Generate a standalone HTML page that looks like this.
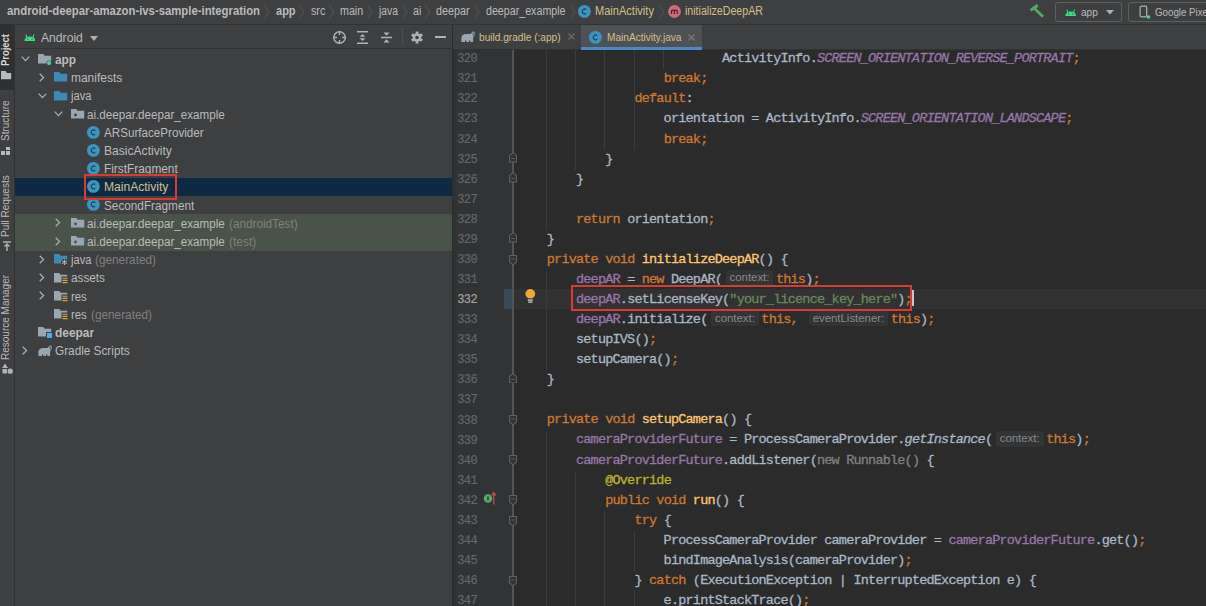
<!DOCTYPE html><html><head><meta charset="utf-8"><style>
*{margin:0;padding:0;box-sizing:border-box}
html,body{width:1206px;height:606px;overflow:hidden;background:#3e3f41;font-family:"Liberation Sans",sans-serif;color:#bbbbbb;position:relative}
div,.p{position:absolute}
.t{position:absolute;white-space:nowrap;font-size:12px;line-height:14px}
.b{font-weight:bold}
.gold{color:#d6bf8a}
.gr{color:#808080}
.ln{position:absolute;left:440px;width:37px;text-align:right;font-family:"Liberation Mono",monospace;font-size:12px;letter-spacing:-0.6px;line-height:20.07px;-webkit-text-stroke:0.2px currentColor;color:#606366}
#code{left:517.6px;top:49.3px;font-family:"Liberation Mono",monospace;font-size:13.5px;letter-spacing:-0.8px;line-height:20.07px;-webkit-text-stroke:0.3px currentColor;color:#a9b7c6;white-space:pre}
.k{color:#cc7832}.f{color:#9876aa}.s{color:#6a8759}.m{color:#ffc66d}.a{color:#bbb529}.i{font-style:italic}.g{color:#808080}
.hint{display:inline-block;-webkit-text-stroke:0;font-family:"Liberation Sans",sans-serif;font-size:11.4px;letter-spacing:0;color:#8a8a8a;background:#323436;border-radius:3px;line-height:15.6px;padding:0 4px;margin:0 2.5px 0 3.5px;vertical-align:1.5px}
.vt{position:absolute;white-space:nowrap;font-size:10px;line-height:12px;transform-origin:0 0;transform:rotate(-90deg)}
</style></head><body>
<div style="left:0px;top:0px;width:1206px;height:24px;background:#3e3f41;"></div>
<div style="left:0px;top:24px;width:1206px;height:1px;background:#323232;"></div>
<div style="left:0px;top:25px;width:14px;height:581px;background:#3e3f41;"></div>
<div style="left:0px;top:25px;width:14px;height:65px;background:#2d2f30;"></div>
<div style="left:14px;top:25px;width:1px;height:581px;background:#323232;"></div>
<div style="left:15px;top:25px;width:438px;height:581px;background:#3e3f41;"></div>
<div style="left:15px;top:48px;width:438px;height:1px;background:#323232;"></div>
<div style="left:453px;top:25px;width:753px;height:24px;background:#3e3f41;"></div>
<div style="left:452px;top:25px;width:1px;height:581px;background:#2b2b2b;"></div>
<div style="left:453px;top:49px;width:753px;height:1px;background:#323232;"></div>
<div style="left:453px;top:50px;width:753px;height:556px;background:#2b2b2b;"></div>
<div style="left:453px;top:50px;width:60px;height:556px;background:#313335;"></div>
<div style="left:453px;top:50px;width:3px;height:556px;background:#2f3133;"></div>
<span class="t b" style="left:7.3px;top:4.3px;font-size:12px;transform-origin:0 0;transform:scaleX(0.9439);">android-deepar-amazon-ivs-sample-integration</span>
<svg class="p" style="left:263.5px;top:5px" width="6" height="14" viewBox="0 0 6 14"><path d="M0.5 0.3 L4.8 6.8 L0.5 13.5" fill="none" stroke="#55585a" stroke-width="0.9"/></svg>
<span class="t b" style="left:275.7px;top:4.3px;font-size:12px;transform-origin:0 0;transform:scaleX(0.9189);">app</span>
<svg class="p" style="left:299px;top:5px" width="6" height="14" viewBox="0 0 6 14"><path d="M0.5 0.3 L4.8 6.8 L0.5 13.5" fill="none" stroke="#55585a" stroke-width="0.9"/></svg>
<span class="t " style="left:310.5px;top:4.3px;font-size:12px;transform-origin:0 0;transform:scaleX(0.8940);">src</span>
<svg class="p" style="left:329px;top:5px" width="6" height="14" viewBox="0 0 6 14"><path d="M0.5 0.3 L4.8 6.8 L0.5 13.5" fill="none" stroke="#55585a" stroke-width="0.9"/></svg>
<span class="t " style="left:340.4px;top:4.3px;font-size:12px;transform-origin:0 0;transform:scaleX(0.8920);">main</span>
<svg class="p" style="left:367px;top:5px" width="6" height="14" viewBox="0 0 6 14"><path d="M0.5 0.3 L4.8 6.8 L0.5 13.5" fill="none" stroke="#55585a" stroke-width="0.9"/></svg>
<span class="t " style="left:378.5px;top:4.3px;font-size:12px;transform-origin:0 0;transform:scaleX(0.8639);">java</span>
<svg class="p" style="left:402px;top:5px" width="6" height="14" viewBox="0 0 6 14"><path d="M0.5 0.3 L4.8 6.8 L0.5 13.5" fill="none" stroke="#55585a" stroke-width="0.9"/></svg>
<span class="t " style="left:413.3px;top:4.3px;font-size:12px;transform-origin:0 0;transform:scaleX(0.8877);">ai</span>
<svg class="p" style="left:425px;top:5px" width="6" height="14" viewBox="0 0 6 14"><path d="M0.5 0.3 L4.8 6.8 L0.5 13.5" fill="none" stroke="#55585a" stroke-width="0.9"/></svg>
<span class="t " style="left:436.3px;top:4.3px;font-size:12px;transform-origin:0 0;transform:scaleX(0.9018);">deepar</span>
<svg class="p" style="left:474px;top:5px" width="6" height="14" viewBox="0 0 6 14"><path d="M0.5 0.3 L4.8 6.8 L0.5 13.5" fill="none" stroke="#55585a" stroke-width="0.9"/></svg>
<span class="t " style="left:485.6px;top:4.3px;font-size:12px;transform-origin:0 0;transform:scaleX(0.8894);">deepar_example</span>
<svg class="p" style="left:569.5px;top:5px" width="6" height="14" viewBox="0 0 6 14"><path d="M0.5 0.3 L4.8 6.8 L0.5 13.5" fill="none" stroke="#55585a" stroke-width="0.9"/></svg>
<svg class="p" style="left:576.9px;top:4.1px" width="14.8" height="14.8" viewBox="0 0 14.8 14.8"><circle cx="7.4" cy="7.4" r="6.4" fill="#3d95bd"/><path d="M9.3 5.7 A2.35 2.35 0 1 0 9.3 9.1" fill="none" stroke="#163f55" stroke-width="1.05"/></svg>
<span class="t gold" style="left:595.2px;top:4.3px;font-size:12px;transform-origin:0 0;transform:scaleX(0.9201);">MainActivity</span>
<svg class="p" style="left:658.5px;top:5px" width="6" height="14" viewBox="0 0 6 14"><path d="M0.5 0.3 L4.8 6.8 L0.5 13.5" fill="none" stroke="#55585a" stroke-width="0.9"/></svg>
<svg class="p" style="left:666.8px;top:3.8px" width="15" height="15" viewBox="0 0 15 15"><circle cx="7.5" cy="7.5" r="6.4" fill="#c96d7a"/><path d="M4.6 10 V6 M4.6 6.8 Q5.8 5.6 7.4 6.5 V10 M7.4 6.8 Q8.6 5.6 10.2 6.5 V10" fill="none" stroke="#4a1f25" stroke-width="1.1"/></svg>
<span class="t gold" style="left:684.5px;top:4.3px;font-size:12px;transform-origin:0 0;transform:scaleX(0.8848);">initializeDeepAR</span>
<svg class="p" style="left:1029px;top:4px" width="16" height="15" viewBox="0 0 16 15"><path d="M1.6 6.4 L8.6 1.2" stroke="#55a865" stroke-width="3"/><path d="M5.6 4.4 L14 12.8" stroke="#55a865" stroke-width="2.8"/></svg>
<div style="left:1055px;top:2px;width:67px;height:20px;background:transparent;border:1px solid #5e6060;border-radius:3px"></div>
<svg class="p" style="left:1064.8px;top:8.5px" width="11.5" height="7.1875" viewBox="0 0 24 15"><path d="M0.8 15 C1.2 8.5 4.5 5 12 5 C19.5 5 22.8 8.5 23.2 15 Z" fill="#3ddc84"/><path d="M5.8 6.5 L4 2 M18.2 6.5 L20 2" stroke="#3ddc84" stroke-width="2.2" stroke-linecap="round"/><circle cx="7.6" cy="10.3" r="1.3" fill="#1f5a3a"/><circle cx="16.4" cy="10.3" r="1.3" fill="#1f5a3a"/></svg>
<span class="t " style="left:1081.3px;top:4.8999999999999995px;font-size:11px;transform-origin:0 0;transform:scaleX(0.9158);">app</span>
<svg class="p" style="left:1105.6px;top:10px" width="8" height="4.6" viewBox="0 0 8 4.6"><path d="M0 0 H8 L4 4.6 Z" fill="#afb1b3"/></svg>
<div style="left:1128px;top:2px;width:90px;height:20px;background:transparent;border:1px solid #5e6060;border-radius:3px"></div>
<svg class="p" style="left:1139px;top:5px" width="12" height="14" viewBox="0 0 12 14"><rect x="1.1" y="1.2" width="6.6" height="10.6" rx="1.2" fill="none" stroke="#afb1b3" stroke-width="1.2"/><circle cx="9.5" cy="12" r="1.8" fill="#3ddc84"/></svg>
<span class="t " style="left:1154.8px;top:4.7px;font-size:11px;transform-origin:0 0;transform:scaleX(0.8849);">Google Pixel</span>
<span class="vt b" style="left:0.2px;top:65.5px;color:#d8d8d8;transform:rotate(-90deg) scaleX(0.94)">Project</span>
<svg class="p" style="left:1px;top:71px" width="11" height="9" viewBox="0 0 11 9"><path d="M0 0 H4.6 L5.8 2 H10.2 V8.2 H0 Z" fill="#b9bbbd"/></svg>
<span class="vt " style="left:-0.3px;top:140.6px;">Structure</span>
<span class="vt " style="left:-0.3px;top:236.8px;">Pull Requests</span>
<span class="vt " style="left:-0.3px;top:359.5px;">Resource Manager</span>
<div style="left:6px;top:147px;width:4px;height:3px;background:#b9bbbd;"></div>
<div style="left:1px;top:151px;width:4px;height:4px;background:#b9bbbd;"></div>
<div style="left:6px;top:151px;width:4px;height:4px;background:#b9bbbd;"></div>
<svg class="p" style="left:2px;top:241px" width="10" height="11" viewBox="0 0 10 11"><path d="M1 1 H9 M5 10 V3 M2.5 5.5 L5 3 L7.5 5.5" fill="none" stroke="#afb1b3" stroke-width="1.5"/></svg>
<svg class="p" style="left:2px;top:363px" width="11" height="11" viewBox="0 0 11 11"><path d="M3 0.5 L6 5 H0 Z" fill="#afb1b3"/><rect x="0.5" y="6" width="4.5" height="4.5" fill="#afb1b3"/><circle cx="8.2" cy="8.2" r="2.6" fill="#afb1b3"/></svg>
<svg class="p" style="left:23.6px;top:34.1px" width="11.8" height="7.375" viewBox="0 0 24 15"><path d="M0.8 15 C1.2 8.5 4.5 5 12 5 C19.5 5 22.8 8.5 23.2 15 Z" fill="#3ddc84"/><path d="M5.8 6.5 L4 2 M18.2 6.5 L20 2" stroke="#3ddc84" stroke-width="2.2" stroke-linecap="round"/><circle cx="7.6" cy="10.3" r="1.3" fill="#1f5a3a"/><circle cx="16.4" cy="10.3" r="1.3" fill="#1f5a3a"/></svg>
<span class="t " style="left:41px;top:30.6px;font-size:12px;transform-origin:0 0;transform:scaleX(1.0126);">Android</span>
<svg class="p" style="left:90px;top:36px" width="8" height="5" viewBox="0 0 8 5"><path d="M0 0 H8 L4 5 Z" fill="#afb1b3"/></svg>
<svg class="p" style="left:332px;top:30px" width="15" height="15" viewBox="0 0 15 15"><circle cx="7.5" cy="7.5" r="5.8" fill="none" stroke="#afb1b3" stroke-width="1.4"/><path d="M7.5 1 V5 M7.5 10 V14 M1 7.5 H5 M10 7.5 H14" stroke="#afb1b3" stroke-width="1.4"/></svg>
<svg class="p" style="left:357px;top:31px" width="12" height="13" viewBox="0 0 12 13"><path d="M0 0.8 H11 M0 12.2 H11" stroke="#afb1b3" stroke-width="1.5"/><path d="M5.5 3 L8.5 5.8 H2.5 Z M5.5 10 L8.5 7.2 H2.5 Z" fill="#afb1b3"/></svg>
<svg class="p" style="left:381px;top:31px" width="12" height="13" viewBox="0 0 12 13"><path d="M0 6.5 H11" stroke="#afb1b3" stroke-width="1.5"/><path d="M5.5 4.8 L8.5 1.5 H2.5 Z M5.5 8.2 L8.5 11.5 H2.5 Z" fill="#afb1b3"/></svg>
<div style="left:401.5px;top:28px;width:1px;height:17px;background:#4b4d4f;"></div>
<svg class="p" style="left:410.5px;top:30.5px" width="12" height="13" viewBox="0 0 12 13"><g transform="translate(6 6.5)"><circle r="4.2" fill="#afb1b3"/><g fill="#afb1b3"><rect x="-1.4" y="-6" width="2.8" height="12"/><rect x="-1.4" y="-6" width="2.8" height="12" transform="rotate(60)"/><rect x="-1.4" y="-6" width="2.8" height="12" transform="rotate(120)"/></g><circle r="1.8" fill="#3e3f41"/></g></svg>
<div style="left:435px;top:36.2px;width:11px;height:1.8px;background:#afb1b3;"></div>
<div style="left:15px;top:177.5px;width:437px;height:18.5px;background:#0e2a42;"></div>
<div style="left:15px;top:213.89999999999998px;width:437px;height:36.9px;background:#4a5349;"></div>
<svg class="p" style="left:21.2px;top:56.1px" width="9" height="6" viewBox="0 0 9 6"><path d="M0.7 0.7 L4.5 4.6 L8.3 0.7" fill="none" stroke="#afb1b3" stroke-width="1.2"/></svg>
<svg class="p" style="left:38px;top:54.2px" width="14" height="11" viewBox="0 0 14 11"><path d="M0 0 H5.2 L6.6 1.8 H13.2 V9.6 H0 Z" fill="#9aa7b0"/><circle cx="11" cy="9" r="2.6" fill="#3e3f41"/><circle cx="11" cy="9" r="2.1" fill="#3ddc84"/></svg>
<span class="t b" style="left:55px;top:52.9px;font-size:12px;transform-origin:0 0;transform:scaleX(0.9855);">app</span>
<svg class="p" style="left:38.9px;top:72.7px" width="6" height="9" viewBox="0 0 6 9"><path d="M0.7 0.7 L4.6 4.5 L0.7 8.3" fill="none" stroke="#afb1b3" stroke-width="1.2"/></svg>
<svg class="p" style="left:54px;top:72.39999999999999px" width="14" height="11" viewBox="0 0 14 11"><path d="M0 0 H5.2 L6.6 1.8 H13.2 V9.6 H0 Z" fill="#3d8bb5"/></svg>
<span class="t " style="left:70.8px;top:71.1px;font-size:12px;transform-origin:0 0;transform:scaleX(0.9970);">manifests</span>
<svg class="p" style="left:38.2px;top:92.5px" width="9" height="6" viewBox="0 0 9 6"><path d="M0.7 0.7 L4.5 4.6 L8.3 0.7" fill="none" stroke="#afb1b3" stroke-width="1.2"/></svg>
<svg class="p" style="left:54px;top:90.6px" width="14" height="11" viewBox="0 0 14 11"><path d="M0 0 H5.2 L6.6 1.8 H13.2 V9.6 H0 Z" fill="#3d8bb5"/></svg>
<span class="t " style="left:71.2px;top:89.3px;font-size:12px;transform-origin:0 0;transform:scaleX(0.9266);">java</span>
<svg class="p" style="left:54.2px;top:110.69999999999999px" width="9" height="6" viewBox="0 0 9 6"><path d="M0.7 0.7 L4.5 4.6 L8.3 0.7" fill="none" stroke="#afb1b3" stroke-width="1.2"/></svg>
<svg class="p" style="left:70.8px;top:108.79999999999998px" width="14" height="11" viewBox="0 0 14 11"><path d="M0 0 H5.2 L6.6 1.8 H13.2 V9.6 H0 Z" fill="#9aa7b0"/><circle cx="4.5" cy="6" r="1.4" fill="#3e3f41"/></svg>
<span class="t " style="left:87.2px;top:107.49999999999999px;font-size:12px;transform-origin:0 0;transform:scaleX(0.9696);">ai.deepar.deepar_example</span>
<svg class="p" style="left:86.1px;top:124.5px" width="14.8" height="14.8" viewBox="0 0 14.8 14.8"><circle cx="7.4" cy="7.4" r="6.4" fill="#3d95bd"/><path d="M9.3 5.7 A2.35 2.35 0 1 0 9.3 9.1" fill="none" stroke="#163f55" stroke-width="1.05"/></svg>
<span class="t " style="left:103.9px;top:125.7px;font-size:12px;transform-origin:0 0;transform:scaleX(0.9697);">ARSurfaceProvider</span>
<svg class="p" style="left:86.1px;top:142.7px" width="14.8" height="14.8" viewBox="0 0 14.8 14.8"><circle cx="7.4" cy="7.4" r="6.4" fill="#3d95bd"/><path d="M9.3 5.7 A2.35 2.35 0 1 0 9.3 9.1" fill="none" stroke="#163f55" stroke-width="1.05"/></svg>
<span class="t " style="left:103.9px;top:143.9px;font-size:12px;transform-origin:0 0;transform:scaleX(1.0067);">BasicActivity</span>
<svg class="p" style="left:86.1px;top:160.89999999999998px" width="14.8" height="14.8" viewBox="0 0 14.8 14.8"><circle cx="7.4" cy="7.4" r="6.4" fill="#3d95bd"/><path d="M9.3 5.7 A2.35 2.35 0 1 0 9.3 9.1" fill="none" stroke="#163f55" stroke-width="1.05"/></svg>
<span class="t " style="left:103.9px;top:162.1px;font-size:12px;transform-origin:0 0;transform:scaleX(0.9875);">FirstFragment</span>
<svg class="p" style="left:86.1px;top:179.1px" width="14.8" height="14.8" viewBox="0 0 14.8 14.8"><circle cx="7.4" cy="7.4" r="6.4" fill="#3d95bd"/><path d="M9.3 5.7 A2.35 2.35 0 1 0 9.3 9.1" fill="none" stroke="#163f55" stroke-width="1.05"/></svg>
<span class="t gold" style="left:103.9px;top:180.3px;font-size:12px;transform-origin:0 0;transform:scaleX(1.0060);">MainActivity</span>
<svg class="p" style="left:86.1px;top:197.29999999999998px" width="14.8" height="14.8" viewBox="0 0 14.8 14.8"><circle cx="7.4" cy="7.4" r="6.4" fill="#3d95bd"/><path d="M9.3 5.7 A2.35 2.35 0 1 0 9.3 9.1" fill="none" stroke="#163f55" stroke-width="1.05"/></svg>
<span class="t " style="left:103.9px;top:198.5px;font-size:12px;transform-origin:0 0;transform:scaleX(0.9804);">SecondFragment</span>
<div style="left:83.6px;top:174px;width:93.8px;height:25.6px;background:transparent;border:2.5px solid #d83b36"></div>
<svg class="p" style="left:55.199999999999996px;top:218.29999999999998px" width="6" height="9" viewBox="0 0 6 9"><path d="M0.7 0.7 L4.6 4.5 L0.7 8.3" fill="none" stroke="#afb1b3" stroke-width="1.2"/></svg>
<svg class="p" style="left:70.8px;top:217.99999999999997px" width="14" height="11" viewBox="0 0 14 11"><path d="M0 0 H5.2 L6.6 1.8 H13.2 V9.6 H0 Z" fill="#9aa7b0"/><circle cx="4.5" cy="6" r="1.4" fill="#4a5349"/></svg>
<span class="t " style="left:87.3px;top:216.7px;font-size:12px;transform-origin:0 0;transform:scaleX(0.9696);">ai.deepar.deepar_example</span>
<span class="t gr" style="left:229.3px;top:216.7px;font-size:12px;transform-origin:0 0;transform:scaleX(0.9795);">(androidTest)</span>
<svg class="p" style="left:55.199999999999996px;top:236.5px" width="6" height="9" viewBox="0 0 6 9"><path d="M0.7 0.7 L4.6 4.5 L0.7 8.3" fill="none" stroke="#afb1b3" stroke-width="1.2"/></svg>
<svg class="p" style="left:70.8px;top:236.2px" width="14" height="11" viewBox="0 0 14 11"><path d="M0 0 H5.2 L6.6 1.8 H13.2 V9.6 H0 Z" fill="#9aa7b0"/><circle cx="4.5" cy="6" r="1.4" fill="#4a5349"/></svg>
<span class="t " style="left:87.3px;top:234.9px;font-size:12px;transform-origin:0 0;transform:scaleX(0.9696);">ai.deepar.deepar_example</span>
<span class="t gr" style="left:229.3px;top:234.9px;font-size:12px;transform-origin:0 0;transform:scaleX(0.9950);">(test)</span>
<svg class="p" style="left:38.9px;top:254.7px" width="6" height="9" viewBox="0 0 6 9"><path d="M0.7 0.7 L4.6 4.5 L0.7 8.3" fill="none" stroke="#afb1b3" stroke-width="1.2"/></svg>
<svg class="p" style="left:54px;top:254.39999999999998px" width="14" height="11" viewBox="0 0 14 11"><path d="M0 0 H5.2 L6.6 1.8 H13.2 V9.6 H0 Z" fill="#3d8bb5"/><circle cx="10.5" cy="8.3" r="3.4" fill="#3e3f41"/><g stroke="#afb1b3" stroke-width="1"><path d="M10.5 5.6 V11 M8 6.9 L13 9.7 M8 9.7 L13 6.9"/></g></svg>
<span class="t " style="left:70.9px;top:253.1px;font-size:12px;transform-origin:0 0;transform:scaleX(0.9266);">java</span>
<span class="t gr" style="left:95.4px;top:253.1px;font-size:12px;transform-origin:0 0;transform:scaleX(0.9832);">(generated)</span>
<svg class="p" style="left:38.9px;top:272.9px" width="6" height="9" viewBox="0 0 6 9"><path d="M0.7 0.7 L4.6 4.5 L0.7 8.3" fill="none" stroke="#afb1b3" stroke-width="1.2"/></svg>
<svg class="p" style="left:54px;top:272.6px" width="14" height="11" viewBox="0 0 14 11"><path d="M0 0 H5.2 L6.6 1.8 H13.2 V9.6 H0 Z" fill="#9aa7b0"/><rect x="7.5" y="3.5" width="6.5" height="7.5" fill="#3e3f41"/><g stroke="#d9a343" stroke-width="1.1"><path d="M8.5 5.2 H13.5 M8.5 7.4 H13.5 M8.5 9.6 H13.5"/></g></svg>
<span class="t " style="left:71.2px;top:271.3px;font-size:12px;transform-origin:0 0;transform:scaleX(0.9803);">assets</span>
<svg class="p" style="left:38.9px;top:291.09999999999997px" width="6" height="9" viewBox="0 0 6 9"><path d="M0.7 0.7 L4.6 4.5 L0.7 8.3" fill="none" stroke="#afb1b3" stroke-width="1.2"/></svg>
<svg class="p" style="left:54px;top:290.8px" width="14" height="11" viewBox="0 0 14 11"><path d="M0 0 H5.2 L6.6 1.8 H13.2 V9.6 H0 Z" fill="#9aa7b0"/><rect x="7.5" y="3.5" width="6.5" height="7.5" fill="#3e3f41"/><g stroke="#d9a343" stroke-width="1.1"><path d="M8.5 5.2 H13.5 M8.5 7.4 H13.5 M8.5 9.6 H13.5"/></g></svg>
<span class="t " style="left:71.2px;top:289.5px;font-size:12px;transform-origin:0 0;transform:scaleX(0.9478);">res</span>
<svg class="p" style="left:54px;top:309.0px" width="14" height="11" viewBox="0 0 14 11"><path d="M0 0 H5.2 L6.6 1.8 H13.2 V9.6 H0 Z" fill="#9aa7b0"/><rect x="7.5" y="3.5" width="6.5" height="7.5" fill="#3e3f41"/><g stroke="#d9a343" stroke-width="1.1"><path d="M8.5 5.2 H13.5 M8.5 7.4 H13.5 M8.5 9.6 H13.5"/></g></svg>
<span class="t " style="left:71.2px;top:307.7px;font-size:12px;transform-origin:0 0;transform:scaleX(0.9478);">res</span>
<span class="t gr" style="left:90.8px;top:307.7px;font-size:12px;transform-origin:0 0;transform:scaleX(0.9832);">(generated)</span>
<svg class="p" style="left:38px;top:327.20000000000005px" width="14" height="11" viewBox="0 0 14 11"><path d="M0 0 H5.2 L6.6 1.8 H13.2 V9.6 H0 Z" fill="#9aa7b0"/><rect x="8" y="5" width="6" height="6" fill="#3e3f41"/><rect x="9" y="6" width="5" height="5" fill="#40b6e0"/></svg>
<span class="t b" style="left:54.9px;top:325.90000000000003px;font-size:12px;transform-origin:0 0;transform:scaleX(0.9929);">deepar</span>
<svg class="p" style="left:22.4px;top:345.7px" width="6" height="9" viewBox="0 0 6 9"><path d="M0.7 0.7 L4.6 4.5 L0.7 8.3" fill="none" stroke="#afb1b3" stroke-width="1.2"/></svg>
<svg class="p" style="left:38px;top:344.8px" width="14" height="11.0" viewBox="0 0 14 11"><path d="M0.4 11 V7.2 C0.4 4.6 2.4 3.1 5.4 3.1 H8.4 C9.4 3.1 10.2 2.6 10.8 1.6 C11.6 0.2 13.8 0.2 13.9 2.2 C14 3.8 12.9 5 12.1 6.8 V11 H9.4 V9.6 H8.1 V11 H5.3 V9.6 H4 V11 Z" fill="#9aa7b0"/><path d="M11.5 2.6 C12 1.6 13 1.8 12.9 2.8 C12.8 3.6 12.4 4.2 12 4.8" fill="none" stroke="#3e3f41" stroke-width="0.9"/></svg>
<span class="t " style="left:54.9px;top:344.1px;font-size:12px;transform-origin:0 0;transform:scaleX(0.9813);">Gradle Scripts</span>
<div style="left:581px;top:25px;width:121px;height:24px;background:#4e5254;"></div>
<div style="left:581px;top:46.5px;width:121px;height:3px;background:#4a88c7;"></div>
<svg class="p" style="left:461px;top:31.200000000000003px" width="14" height="11.0" viewBox="0 0 14 11"><path d="M0.4 11 V7.2 C0.4 4.6 2.4 3.1 5.4 3.1 H8.4 C9.4 3.1 10.2 2.6 10.8 1.6 C11.6 0.2 13.8 0.2 13.9 2.2 C14 3.8 12.9 5 12.1 6.8 V11 H9.4 V9.6 H8.1 V11 H5.3 V9.6 H4 V11 Z" fill="#9aa7b0"/><path d="M11.5 2.6 C12 1.6 13 1.8 12.9 2.8 C12.8 3.6 12.4 4.2 12 4.8" fill="none" stroke="#3e3f41" stroke-width="0.9"/></svg>
<span class="t gold" style="left:479px;top:31px;font-size:10.2px;transform-origin:0 0;transform:scaleX(0.9936);">build.gradle (:app)</span>
<svg class="p" style="left:568px;top:33px" width="7" height="7" viewBox="0 0 7 7"><path d="M0.5 0.5 L6.5 6.5 M6.5 0.5 L0.5 6.5" stroke="#6e6e6e" stroke-width="1.1"/></svg>
<svg class="p" style="left:588.1px;top:30.1px" width="14.8" height="14.8" viewBox="0 0 14.8 14.8"><circle cx="7.4" cy="7.4" r="6.4" fill="#3d95bd"/><path d="M9.3 5.7 A2.35 2.35 0 1 0 9.3 9.1" fill="none" stroke="#163f55" stroke-width="1.05"/></svg>
<span class="t gold" style="left:606.6px;top:31px;font-size:10.2px;transform-origin:0 0;transform:scaleX(0.9915);">MainActivity.java</span>
<svg class="p" style="left:688.3px;top:33.6px" width="7" height="7" viewBox="0 0 7 7"><path d="M0.5 0.5 L6.5 6.5 M6.5 0.5 L0.5 6.5" stroke="#7b7b7b" stroke-width="1.1"/></svg>
<div style="left:513px;top:288.89000000000004px;width:693px;height:20px;background:#323232;"></div>
<div style="left:504px;top:288.89000000000004px;width:8px;height:20px;background:#3a4957;"></div>
<span class="ln" style="top:49.25px;color:#63666a">320</span>
<span class="ln" style="top:69.32px;color:#63666a">321</span>
<span class="ln" style="top:89.39px;color:#63666a">322</span>
<span class="ln" style="top:109.46px;color:#63666a">323</span>
<span class="ln" style="top:129.53px;color:#63666a">324</span>
<span class="ln" style="top:149.60px;color:#63666a">325</span>
<span class="ln" style="top:169.67px;color:#63666a">326</span>
<span class="ln" style="top:189.74px;color:#63666a">327</span>
<span class="ln" style="top:209.81px;color:#63666a">328</span>
<span class="ln" style="top:229.88px;color:#63666a">329</span>
<span class="ln" style="top:249.95px;color:#63666a">330</span>
<span class="ln" style="top:270.02px;color:#63666a">331</span>
<span class="ln" style="top:290.09px;color:#a4a3a3">332</span>
<span class="ln" style="top:310.16px;color:#63666a">333</span>
<span class="ln" style="top:330.23px;color:#63666a">334</span>
<span class="ln" style="top:350.30px;color:#63666a">335</span>
<span class="ln" style="top:370.37px;color:#63666a">336</span>
<span class="ln" style="top:390.44px;color:#63666a">337</span>
<span class="ln" style="top:410.51px;color:#63666a">338</span>
<span class="ln" style="top:430.58px;color:#63666a">339</span>
<span class="ln" style="top:450.65px;color:#63666a">340</span>
<span class="ln" style="top:470.72px;color:#63666a">341</span>
<span class="ln" style="top:490.79px;color:#63666a">342</span>
<span class="ln" style="top:510.86px;color:#63666a">343</span>
<span class="ln" style="top:530.93px;color:#63666a">344</span>
<span class="ln" style="top:551.00px;color:#63666a">345</span>
<span class="ln" style="top:571.07px;color:#63666a">346</span>
<span class="ln" style="top:591.14px;color:#63666a">347</span>
<div style="left:512.3px;top:50px;width:1.3px;height:556px;background:#525456;"></div>
<svg class="p" style="left:508.7px;top:152.2px" width="8" height="10.5" viewBox="0 0 8 10.5"><path d="M0.55 9.95 V3.4 L4 0.55 L7.45 3.4 V9.95 Z" fill="#313335" stroke="#5e6163" stroke-width="1.1"/><path d="M2.4 6.5 H5.6" stroke="#5e6163" stroke-width="1"/></svg>
<svg class="p" style="left:508.7px;top:172.27px" width="8" height="10.5" viewBox="0 0 8 10.5"><path d="M0.55 9.95 V3.4 L4 0.55 L7.45 3.4 V9.95 Z" fill="#313335" stroke="#5e6163" stroke-width="1.1"/><path d="M2.4 6.5 H5.6" stroke="#5e6163" stroke-width="1"/></svg>
<svg class="p" style="left:508.7px;top:232.48px" width="8" height="10.5" viewBox="0 0 8 10.5"><path d="M0.55 9.95 V3.4 L4 0.55 L7.45 3.4 V9.95 Z" fill="#313335" stroke="#5e6163" stroke-width="1.1"/><path d="M2.4 6.5 H5.6" stroke="#5e6163" stroke-width="1"/></svg>
<svg class="p" style="left:508.7px;top:372.97px" width="8" height="10.5" viewBox="0 0 8 10.5"><path d="M0.55 9.95 V3.4 L4 0.55 L7.45 3.4 V9.95 Z" fill="#313335" stroke="#5e6163" stroke-width="1.1"/><path d="M2.4 6.5 H5.6" stroke="#5e6163" stroke-width="1"/></svg>
<svg class="p" style="left:508.7px;top:254.64999999999998px" width="8" height="10.5" viewBox="0 0 8 10.5"><path d="M0.55 0.55 V7.1 L4 9.95 L7.45 7.1 V0.55 Z" fill="#313335" stroke="#5e6163" stroke-width="1.1"/><path d="M2.4 4 H5.6" stroke="#5e6163" stroke-width="1"/></svg>
<svg class="p" style="left:508.7px;top:415.21px" width="8" height="10.5" viewBox="0 0 8 10.5"><path d="M0.55 0.55 V7.1 L4 9.95 L7.45 7.1 V0.55 Z" fill="#313335" stroke="#5e6163" stroke-width="1.1"/><path d="M2.4 4 H5.6" stroke="#5e6163" stroke-width="1"/></svg>
<svg class="p" style="left:508.7px;top:455.34999999999997px" width="8" height="10.5" viewBox="0 0 8 10.5"><path d="M0.55 0.55 V7.1 L4 9.95 L7.45 7.1 V0.55 Z" fill="#313335" stroke="#5e6163" stroke-width="1.1"/><path d="M2.4 4 H5.6" stroke="#5e6163" stroke-width="1"/></svg>
<svg class="p" style="left:508.7px;top:495.49px" width="8" height="10.5" viewBox="0 0 8 10.5"><path d="M0.55 0.55 V7.1 L4 9.95 L7.45 7.1 V0.55 Z" fill="#313335" stroke="#5e6163" stroke-width="1.1"/><path d="M2.4 4 H5.6" stroke="#5e6163" stroke-width="1"/></svg>
<svg class="p" style="left:508.7px;top:515.5600000000001px" width="8" height="10.5" viewBox="0 0 8 10.5"><path d="M0.55 0.55 V7.1 L4 9.95 L7.45 7.1 V0.55 Z" fill="#313335" stroke="#5e6163" stroke-width="1.1"/><path d="M2.4 4 H5.6" stroke="#5e6163" stroke-width="1"/></svg>
<svg class="p" style="left:508.7px;top:575.7700000000001px" width="8" height="10.5" viewBox="0 0 8 10.5"><path d="M0.55 0.55 V7.1 L4 9.95 L7.45 7.1 V0.55 Z" fill="#313335" stroke="#5e6163" stroke-width="1.1"/><path d="M2.4 4 H5.6" stroke="#5e6163" stroke-width="1"/></svg>
<svg class="p" style="left:525.3px;top:288.6px" width="11" height="14" viewBox="0 0 11 14"><ellipse cx="5.3" cy="4.7" rx="4.9" ry="4.6" fill="#f2a836"/><rect x="2.4" y="6" width="5.8" height="3.2" rx="1.2" fill="#f2a836"/><path d="M2.7 11.1 H7.9 M3.2 13.1 H7.4" stroke="#d4d4d4" stroke-width="1.1"/></svg>
<svg class="p" style="left:482.5px;top:491px" width="14" height="15" viewBox="0 0 14 15"><circle cx="5" cy="7.5" r="4.3" fill="#59a869"/><path d="M5 5.5 V9.5" stroke="#1e3a22" stroke-width="1.3"/><path d="M10.8 13.5 V2.5 M8.8 4.5 L10.8 1.5 L12.8 4.5" fill="none" stroke="#c75450" stroke-width="1.2"/></svg>
<div style="left:546.0000000000001px;top:50px;width:1px;height:179.88px;background:#393b3c;"></div>
<div style="left:575.2px;top:50px;width:1px;height:119.67000000000002px;background:#393b3c;"></div>
<div style="left:604.4000000000001px;top:50px;width:1px;height:99.6px;background:#393b3c;"></div>
<div style="left:633.6px;top:50px;width:1px;height:99.6px;background:#393b3c;"></div>
<div style="left:662.8000000000001px;top:50px;width:1px;height:19.319999999999993px;background:#393b3c;"></div>
<div style="left:546.0000000000001px;top:270.02px;width:1px;height:100.35000000000002px;background:#393b3c;"></div>
<div style="left:546.0000000000001px;top:430.58px;width:1px;height:175.42000000000002px;background:#393b3c;"></div>
<div style="left:575.2px;top:470.72px;width:1px;height:135.27999999999997px;background:#393b3c;"></div>
<div style="left:604.4000000000001px;top:510.86px;width:1px;height:95.13999999999999px;background:#393b3c;"></div>
<div style="left:633.6px;top:530.9300000000001px;width:1px;height:40.139999999999986px;background:#393b3c;"></div>
<div style="left:633.6px;top:591.14px;width:1px;height:14.860000000000014px;background:#393b3c;"></div>
<div id="code">                            ActivityInfo.<span class="f i">SCREEN_ORIENTATION_REVERSE_PORTRAIT</span><span class="k">;</span>
                    <span class="k">break;</span>
                <span class="k">default</span>:
                    orientation = ActivityInfo.<span class="f i">SCREEN_ORIENTATION_LANDSCAPE</span><span class="k">;</span>
                    <span class="k">break;</span>
            }
        }

        <span class="k">return</span> orientation<span class="k">;</span>
    }
    <span class="k">private void</span> <span class="m">initializeDeepAR</span>() {
        <span class="f">deepAR</span> = <span class="k">new</span> DeepAR(<span class="hint">context:</span><span class="k">this</span>)<span class="k">;</span>
        <span class="f">deepAR</span>.setLicenseKey(<span class="s">"your_licence_key_here"</span>)<span class="k">;</span>
        <span class="f">deepAR</span>.initialize(<span class="hint">context:</span><span class="k">this,</span> <span class="hint">eventListener:</span><span class="k">this</span>)<span class="k">;</span>
        setupIVS()<span class="k">;</span>
        setupCamera()<span class="k">;</span>
    }

    <span class="k">private void</span> <span class="m">setupCamera</span>() {
        <span class="f">cameraProviderFuture</span> = ProcessCameraProvider.<span class="i">getInstance</span>(<span class="hint">context:</span><span class="k">this</span>)<span class="k">;</span>
        <span class="f">cameraProviderFuture</span>.addListener(<span class="g">new Runnable()</span> {
            <span class="a">@Override</span>
            <span class="k">public void</span> <span class="m">run</span>() {
                <span class="k">try</span> {
                    ProcessCameraProvider cameraProvider = <span class="f">cameraProviderFuture</span>.get()<span class="k">;</span>
                    bindImageAnalysis(cameraProvider)<span class="k">;</span>
                } <span class="k">catch</span> (ExecutionException | InterruptedException e) {
                    e.printStackTrace()<span class="k">;</span></div>
<div style="left:571px;top:284.9px;width:341.2px;height:26px;background:transparent;border:2.6px solid #d83b36"></div>
<div style="left:912.4px;top:289.8px;width:1.2px;height:16.2px;background:#c8c8c8;"></div>
</body></html>
